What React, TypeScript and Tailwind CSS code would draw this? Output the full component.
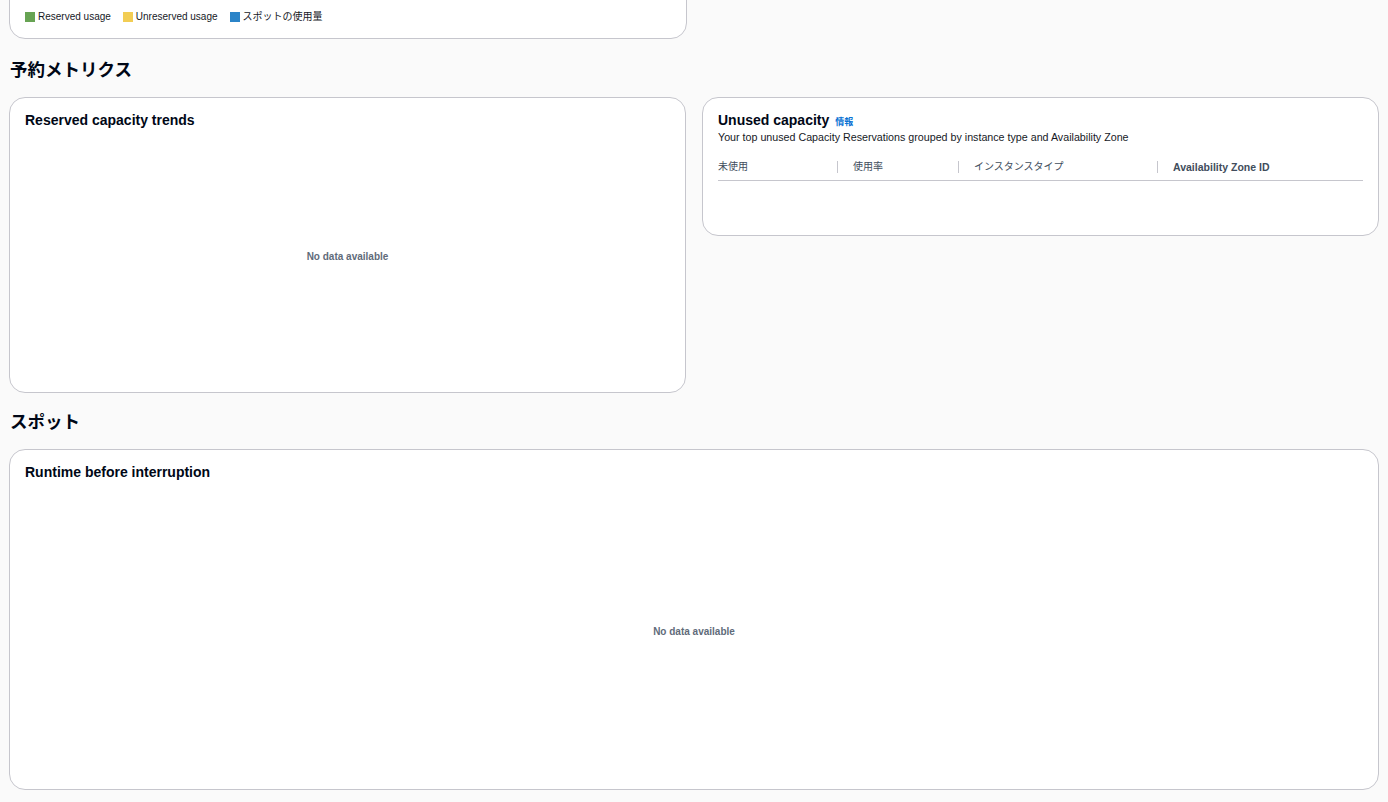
const font = "font-['Liberation_Sans','Noto_Sans_CJK_JP',sans-serif]"

const legend = [
  { label: "Reserved usage", color: "bg-[#67a353]" },
  { label: "Unreserved usage", color: "bg-[#f2cd54]" },
  { label: "スポットの使用量", color: "bg-[#2b84c8]" },
] as const

const columns = [
  { label: "未使用", width: "w-[119px]", bold: false },
  { label: "使用率", width: "w-[121px]", bold: false },
  { label: "インスタンスタイプ", width: "w-[199px]", bold: false },
  { label: "Availability Zone ID", width: "flex-1", bold: true },
] as const

function NoData() {
  return (
    <span className="text-[10px] font-bold text-[#5f6b7a]">
      No data available
    </span>
  )
}

export default function App() {
  return (
    <div
      className={`${font} min-h-[802px] overflow-hidden bg-[#fafafa] px-[9px] text-[#000716]`}
    >
      {/* 上のカード（凡例だけ見えている） */}
      <div className="-mt-[20px] w-[678px] rounded-2xl border border-[#c6c6cd] bg-white px-[15px] pt-[28px] pb-[13px]">
        <ul className="flex items-center gap-3 text-[10px] leading-4 text-[#16191f]">
          {legend.map((item) => (
            <li key={item.label} className="flex items-center gap-[3px]">
              <span className={`h-[10px] w-[10px] ${item.color}`} />
              {item.label}
            </li>
          ))}
        </ul>
      </div>

      <h2 className="pt-[19px] pb-[15px] pl-px text-[17.5px] font-bold leading-6">
        予約メトリクス
      </h2>

      <div className="grid grid-cols-2 items-start gap-4">
        <section className="h-[296px] rounded-2xl border border-[#c6c6cd] bg-white px-[15px] pt-[13px]">
          <h3 className="text-[14px] font-bold leading-[18px]">
            Reserved capacity trends
          </h3>
          <div className="flex h-[254px] items-center justify-center">
            <NoData />
          </div>
        </section>

        <section className="h-[139px] rounded-2xl border border-[#c6c6cd] bg-white px-[15px] pt-[13px]">
          <div className="flex items-baseline gap-[6px]">
            <h3 className="text-[14px] font-bold leading-[18px]">
              Unused capacity
            </h3>
            <a href="#" className="text-[9px] font-bold text-[#0972d3]">
              情報
            </a>
          </div>
          <p className="text-[10.7px] leading-[14px] text-[#16191f]">
            Your top unused Capacity Reservations grouped by instance type and
            Availability Zone
          </p>
          <div className="flex border-b border-[#c6c6cd] pt-[15px] pb-[5px] text-[10px] leading-4 text-[#414d5c]">
            {columns.map((col, i) => (
              <div
                key={col.label}
                className={`flex items-center ${col.width} ${col.bold ? "font-bold text-[10.5px]" : ""}`}
              >
                {i > 0 && (
                  <span className="mr-[15px] h-[12px] w-px bg-[#c6c6cd]" />
                )}
                {col.label}
              </div>
            ))}
          </div>
        </section>
      </div>

      <h2 className="pt-[17px] pb-[15px] pl-px text-[17.5px] font-bold leading-6">
        スポット
      </h2>

      <section className="h-[341px] rounded-2xl border border-[#c6c6cd] bg-white px-[15px] pt-[13px]">
        <h3 className="text-[14px] font-bold leading-[18px]">
          Runtime before interruption
        </h3>
        <div className="flex h-[300px] items-center justify-center">
          <NoData />
        </div>
      </section>
    </div>
  )
}
